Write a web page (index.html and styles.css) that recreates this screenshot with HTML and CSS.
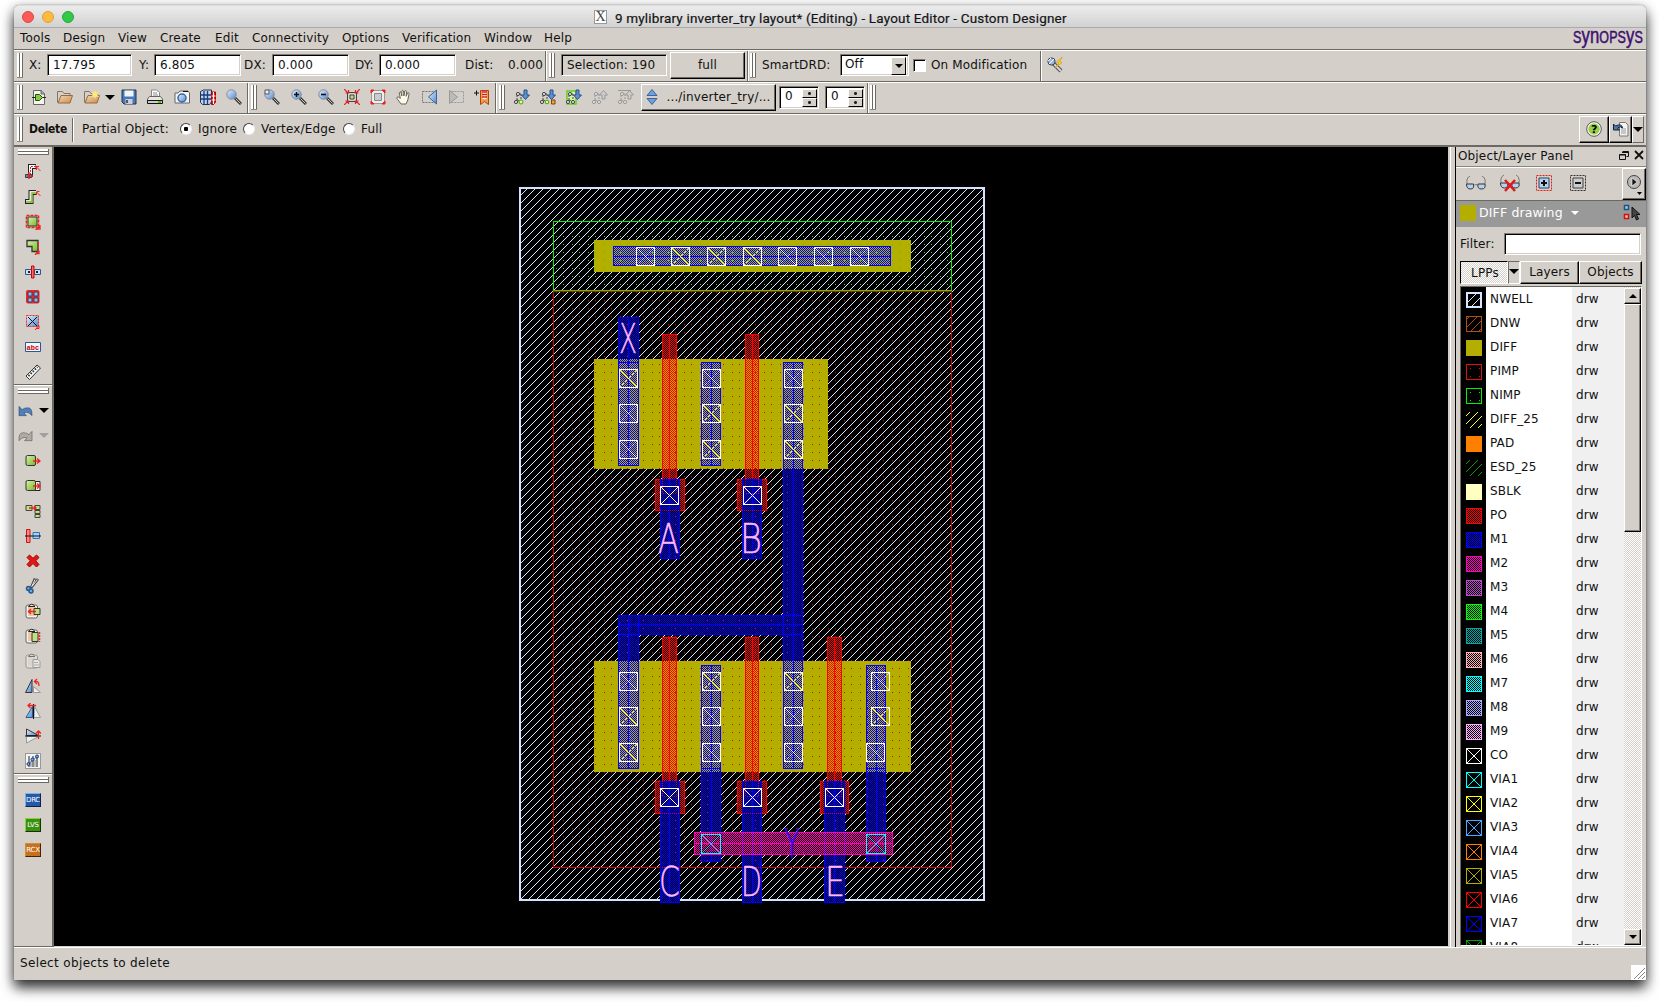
FILE: index.html
```html
<!DOCTYPE html>
<html lang="en">
<head>
<meta charset="utf-8">
<title>Layout Editor - Custom Designer</title>
<link rel="stylesheet" href="styles.css">
</head>
<body>
<svg class="defs" width="0" height="0">
  <defs>
    <linearGradient id="gb" x1="0" y1="0" x2="1" y2="1"><stop offset="0" stop-color="#e4f0ff"/><stop offset="1" stop-color="#5588cc"/></linearGradient>
    <linearGradient id="gg" x1="0" y1="0" x2="1" y2="1"><stop offset="0" stop-color="#d8f0a8"/><stop offset="1" stop-color="#7ab82a"/></linearGradient>
    <linearGradient id="gt" x1="0" y1="0" x2="1" y2="1"><stop offset="0" stop-color="#f4d8b4"/><stop offset="1" stop-color="#c88c4c"/></linearGradient>
    <symbol id="i-new" viewBox="0 0 16 16"><path d="M2.5 1.500h8l3 3v11h-11z" fill="#f4f4f0" stroke="#666"/><path d="M10 1v4h4" fill="#aaa" stroke="#666"/><path d="M1 8.500h4m6 0h4" stroke="#222"/><path d="M4.500 5.500h4l3 3-3 3h-4z" fill="#8c4" stroke="#250"/></symbol>
    <symbol id="i-open" viewBox="0 0 16 16"><path d="M.5 13.500v-11h5l1.500 2h6v2" fill="#d8d0c4" stroke="#777"/><path d="M1 14l3-7.500h11.500l-2.500 7.500z" fill="url(#gt)" stroke="#9a6a3c"/></symbol>
    <symbol id="i-openstar" viewBox="0 0 16 16"><use href="#i-open"/><path d="M11 1l1 2.500 3-.5-2 2.500 2 2.500-3-.5-1 2.500-1-2.500-3 .5 2-2.500-2-2.500 3 .5z" fill="#ffe97a"/></symbol>
    <symbol id="i-save" viewBox="0 0 16 16"><path d="M1 1h14v14h-12l-2-2z" fill="#4a78b4" stroke="#234"/><rect x="3.500" y="1.500" width="9" height="6" fill="#eef4fa"/><rect x="4.500" y="10" width="7" height="5" fill="#ccd"/><path d="M6 11v3" stroke="#234" stroke-width="1.500"/></symbol>
    <symbol id="i-print" viewBox="0 0 16 16"><path d="M4.500 8v-7h5l3 2.500v4.500" fill="#fff" stroke="#888"/><path d="M6 4h4M6 6h5" stroke="#888"/><path d="M2.500 7.500h11l2 2.500v2h-15v-2z" fill="#e8e8e0" stroke="#666"/><path d="M.5 11.500h15v3h-15z" fill="#ccc" stroke="#111"/><path d="M11 13h3" stroke="#5c0" stroke-width="2"/></symbol>
    <symbol id="i-cam" viewBox="0 0 16 16"><path d="M1 4h3l2-2h8l1.500 2v10h-14.500z" fill="#f4f4f4" stroke="#666"/><path d="M9 2.500h5" stroke="#111"/><circle cx="8" cy="9" r="4" fill="url(#gb)" stroke="#3666a4" stroke-width="1.500"/></symbol>
    <symbol id="i-cols" viewBox="0 0 16 16"><path d="M.5 2.500l3-1.500h8v12l-2 2.500h-7l-2-2z" fill="#bcd4f0" stroke="#235"/><path d="M4 2v13M7.500 2v13M1 6h10M1 10h10" stroke="#1a3c78" stroke-width="1.300"/><path d="M11.500 3h4v10l-2 2.500h-2z" fill="#e02020" stroke="#a00"/><path d="M11.500 7h4m-4 4h4m-2-8v12" stroke="#fff"/></symbol>
    <symbol id="i-mag" viewBox="0 0 16 16"><circle cx="5.500" cy="5.500" r="4.700" fill="url(#gb)" stroke="#8088a0"/><path d="M9 9l6 6" stroke="#333" stroke-width="3"/><path d="M9.500 9.500l5 5" stroke="#ccc"/></symbol>
    <symbol id="i-zbox" viewBox="0 0 16 16"><use href="#i-mag"/><path d="M1 1h4v4h-4z" fill="#eee" stroke="#555"/></symbol>
    <symbol id="i-zin" viewBox="0 0 16 16"><use href="#i-mag"/><path d="M3 5.500h5M5.500 3v5" stroke="#111" stroke-width="1.400"/></symbol>
    <symbol id="i-zout" viewBox="0 0 16 16"><use href="#i-mag"/><path d="M3 5.500h5" stroke="#111" stroke-width="1.600"/></symbol>
    <symbol id="i-fit" viewBox="0 0 16 16"><path d="M3.500 3.500h9v9h-9z" fill="none" stroke="#444"/><path d="M6 6h4v4h-4z" fill="#bfe080" stroke="#444"/><path d="M0 0l4 4M16 0l-4 4M0 16l4-4M16 16l-4-4M1.500 4h3v-3M14.500 4h-3v-3M1.500 12h3v3M14.500 12h-3v3" fill="none" stroke="#e02020" stroke-width="1.200"/></symbol>
    <symbol id="i-fit2" viewBox="0 0 16 16"><path d="M1.500 1.500h13v13h-13z" fill="#eee" stroke="#999"/><path d="M4.500 4.500h7v7h-7z" fill="#ccc" stroke="#888"/><path d="M1 4v-3h3zM15 4v-3h-3zM1 12v3h3zM15 12v3h-3z" fill="#f02020" stroke="#f02020"/></symbol>
    <symbol id="i-hand" viewBox="0 0 16 16"><path d="M5 15l-4-5.500q-.6-2 1.500-1.500l1.800 1.500-1-6q.7-1.600 1.700 0l.8 3.500v-5q1-1.600 1.800 0l.3 5 .9-5q1-1.200 1.700.3l-.3 5 1.400-3.400q1.200-.8 1.500.8l-1.300 6.300-1.800 4z" fill="#fff8ec" stroke="#665"/></symbol>
    <symbol id="i-prev" viewBox="0 0 16 16"><path d="M.5 2.500h12v11h-12z" fill="none" stroke="#777" stroke-dasharray="2 1"/><path d="M14.500 1v14l-8-7z" fill="url(#gb)" stroke="#3666a4"/></symbol>
    <symbol id="i-next" viewBox="0 0 16 16"><path d="M3.500 2.500h12v11h-12z" fill="none" stroke="#999" stroke-dasharray="2 1"/><path d="M1.500 1.500v13l8-6.500z" fill="#bbb" stroke="#999"/></symbol>
    <symbol id="i-book" viewBox="0 0 16 16"><path d="M0 4h5M2.500 1.500v5" stroke="#111"/><path d="M6.500 1.500h8v14l-4-3-4 3z" fill="#f4a040" stroke="#b04010"/><path d="M8.500 2h4v8h-4z" fill="#fff"/><path d="M8 3h5M8 5.500h5M8 8h5" stroke="#d02020" stroke-width="1.300"/></symbol>
    <symbol id="i-tree" viewBox="0 0 16 16"><path d="M3 11v-6M3 5h4M3 11l5 2M7 5v5" fill="none" stroke="currentColor" stroke-dasharray="2 1"/><circle cx="4" cy="5" r="1.600" fill="#ddd" stroke="currentColor"/><circle cx="2" cy="13" r="1.600" fill="#ddd" stroke="currentColor"/><circle cx="7" cy="13" r="1.600" fill="#ddd" stroke="currentColor"/></symbol>
    <symbol id="i-down" viewBox="0 0 16 16"><use href="#i-tree"/><path d="M10 1h3v5h2.500l-4 4.500-4-4.500h2.500z" fill="#5f90d0" stroke="#24518c"/></symbol>
    <symbol id="i-d1" viewBox="0 0 16 16"><use href="#i-down"/><circle cx="7" cy="13" r="2" fill="#dfa" stroke="#5a0"/></symbol>
    <symbol id="i-d2" viewBox="0 0 16 16"><use href="#i-down"/><circle cx="7" cy="13" r="1.800" fill="#dfa" stroke="#5a0"/><path d="M11.500 11h3.500v4h-3.500z" fill="#f0a050" stroke="#840"/></symbol>
    <symbol id="i-d3" viewBox="0 0 16 16"><path d="M1 2h9v13h-9z" fill="#d8f0b0" stroke="#6c2" stroke-width="1.500"/><use href="#i-down"/></symbol>
    <symbol id="i-up" viewBox="0 0 16 16"><use href="#i-tree"/><path d="M10 10v-4h-2.500l4-4.500 4 4.500h-2.500v4z" fill="#ccc" stroke="#999"/></symbol>
    <symbol id="i-up2" viewBox="0 0 16 16"><use href="#i-up"/><path d="M0 1.500h13" stroke="#999"/></symbol>
    <symbol id="i-updn" viewBox="0 0 12 16"><path d="M6 .5l5 6h-10zM6 15.500l5-6h-10z" fill="#6f9fdc" stroke="#24518c" stroke-width=".8"/></symbol>
    <symbol id="i-drd" viewBox="0 0 16 16"><path d="M6 6l8 8" stroke="#555" stroke-width="4"/><path d="M6 6l8 8" stroke="#ddd" stroke-width="1.800"/><circle cx="4.500" cy="4.500" r="3.600" fill="#9ab8e0" stroke="#345"/><path d="M2 7l5-5M1 4l3-3" stroke="#fff"/><path d="M15.500 0l-6 5 2.500 1-4 5 7-5.500-2.500-1z" fill="#ffd020" stroke="#c80" stroke-width=".5"/></symbol>
    <symbol id="i-help" viewBox="0 0 16 16"><circle cx="8" cy="8" r="7.300" fill="#fff" stroke="#555"/><circle cx="8" cy="8" r="5.800" fill="#9ad048"/></symbol>
    <symbol id="i-backdoc" viewBox="0 0 16 16"><path d="M6.500 1.500h6l2.500 2.500v11h-8.500z" fill="#f4f4f4" stroke="#777"/><path d="M8 8h5M8 10h5M8 12h5" stroke="#999"/><path d="M.5 3v6h6l-2-2q3-2.500 5 0-.5-5-7-2z" fill="#4a78b4" stroke="#123"/></symbol>

    <symbol id="l-path" viewBox="0 0 16 16"><path d="M5.500 13V2.500h5.500" fill="none" stroke="#222" stroke-width="5"/><path d="M5.500 13V2.500h5" fill="none" stroke="#fff" stroke-width="3"/><path d="M5.500 11V2.500h6" fill="none" stroke="#e22" stroke-dasharray="2 1"/><path d="M11 2.500h3M11.500 3l4 4M11.500 3v3" stroke="#e22"/></symbol>
    <symbol id="l-pathr" viewBox="0 0 16 16"><use href="#l-path"/><path d="M.5 10.500h6v3h-6z" fill="#6a94d4" stroke="#245"/><path d="M4 8v7M2 12h6" stroke="#e22" stroke-width="1.400"/></symbol>
    <symbol id="l-pathg" viewBox="0 0 16 16"><path d="M0 12.500H6V3.500h5" fill="none" stroke="#222" stroke-width="5"/><path d="M1 12.500H6V3.500h5" fill="none" stroke="#e8e8e0" stroke-width="3"/><path d="M1 13H7V4h4" fill="none" stroke="#7ab82a" stroke-width="1.500"/><path d="M11.500 2.500h3M11.500 3l4 4M11.500 3v3" stroke="#e22"/></symbol>
    <symbol id="l-rect" viewBox="0 0 16 16"><path d="M1.500 1.500h12v12h-12z" fill="none" stroke="#e22" stroke-width="1.600" stroke-dasharray="3 1"/><path d="M3 3h9v9h-9z" fill="url(#gg)" stroke="#333"/><path d="M15 11v4h-4M14.500 12l-4 4" stroke="#e22" stroke-width="1.300" fill="none"/></symbol>
    <symbol id="l-poly" viewBox="0 0 16 16"><path d="M2 1.500h11v11h-6v-5h-5z" fill="url(#gg)" stroke="#333" stroke-width="1.300"/><path d="M13.500 3v10" stroke="#e22" stroke-dasharray="2 1"/><path d="M14 11.500v3h-3M13 12.500l-3 3.500" stroke="#e22" stroke-width="1.300" fill="none"/></symbol>
    <symbol id="l-inst" viewBox="0 0 16 16"><path d="M.5 5.500h6v5h-6zM9.500 5.500h6v5h-6z" fill="#cde" stroke="#245a98"/><path d="M3 7h2v2h-2zM11 7h2v2h-2z" fill="#222"/><path d="M6.500 2h2.500v12h-2.500z" fill="#f66" stroke="#c00"/></symbol>
    <symbol id="l-arr" viewBox="0 0 16 16"><rect x="1" y="1" width="13.500" height="13.500" rx="2" fill="#e22"/><path d="M3 3h4v4h-4zM9 3h4v4h-4zM3 9h4v4h-4zM9 9h4v4h-4z" fill="#9ab8e8" stroke="#346"/></symbol>
    <symbol id="l-via" viewBox="0 0 16 16"><path d="M1.500 1.500h12v11h-12z" fill="url(#gb)" stroke="#e22" stroke-dasharray="2 1"/><path d="M3 3l9 9M12 3l-9 9" stroke="#111"/><path d="M14 11.500v3h-3M13 12.500l-3 3.500" stroke="#e22" fill="none"/></symbol>
    <symbol id="l-abc" viewBox="0 0 16 16"><path d="M.5 3.500h15v9h-15z" fill="#f6f6fa" stroke="#245a98"/><text x="1.600" y="10.500" font-family="Liberation Mono" font-weight="bold" font-size="7" letter-spacing="0" fill="#c00">abc</text></symbol>
    <symbol id="l-rule" viewBox="0 0 16 16"><path d="M1 12l11-11 3.500 3-11 11.500z" fill="#f8f8f8" stroke="#333"/><path d="M3.500 12l9-9" stroke="#333" stroke-dasharray="1.500 1.500" stroke-width="2"/></symbol>
    <symbol id="l-undo" viewBox="0 0 16 16"><path d="M1 3v10h8l-2.500-3q4-2 8.500 3 .500-9-5-8.500-3.500 0-5.500 2z" fill="currentColor" stroke="#0005"/></symbol>
    <symbol id="l-move" viewBox="0 0 16 16"><rect x="1" y="2.500" width="9.500" height="10" rx="1.500" fill="url(#gg)" stroke="#333"/><path d="M8 8h7M12 5.500l3 2.500-3 2.500" fill="none" stroke="#e22" stroke-width="1.400"/></symbol>
    <symbol id="l-copy" viewBox="0 0 16 16"><path d="M9 3.500h6v9h-6z" fill="#f4f4f0" stroke="#222"/><use href="#l-move"/></symbol>
    <symbol id="l-multi" viewBox="0 0 16 16"><path d="M1 2.500h6v5h-6zM10 2.500h5v4h-5zM10 7.500h5v3h-5zM10 11.500h5v3h-5z" fill="#bfe080" stroke="#444"/><path d="M4 5h7M9 3l2 2-2 2" stroke="#e22" fill="none" stroke-width="1.300"/></symbol>
    <symbol id="l-align" viewBox="0 0 16 16"><path d="M1.500 1.500h3.500v13h-3.500z" fill="#f88" stroke="#c11"/><path d="M8 4.500h6.500v6h-6.500z" fill="#acf" stroke="#37a"/><path d="M0 8h16" stroke="#111"/></symbol>
    <symbol id="l-del" viewBox="0 0 16 16"><path d="M2 4.500l2.500-2.500 3.500 3.300 3.500-3.300 2.500 2.500-3.300 3.300 3.300 3.700-2.500 2.500-3.500-3.500-3.500 3.500-2.500-2.500 3.300-3.700z" fill="#e01818" stroke="#a00"/></symbol>
    <symbol id="l-cut" viewBox="0 0 16 16"><path d="M6 10l7-9M6 10l4-9.500" stroke="#444" stroke-width="2.500"/><path d="M6.500 9l6-7.500M7 8l3-6.500" stroke="#eee"/><circle cx="3.500" cy="10.500" r="2" fill="#7ac" stroke="#235a98" stroke-width="1.500"/><circle cx="6" cy="13" r="2" fill="#7ac" stroke="#235a98" stroke-width="1.500"/></symbol>
    <symbol id="l-clip" viewBox="0 0 16 16"><rect x="1" y="2" width="11.500" height="13" rx="2" fill="#f4f2ee" stroke="#666"/><path d="M3 4h8v9h-8z" fill="currentColor"/><path d="M3.500 3.500q3-4.500 6.500 0z" fill="#eee" stroke="#222"/></symbol>
    <symbol id="l-pin" viewBox="0 0 16 16"><use href="#l-clip"/><path d="M9 5.500h6v6h-6z" fill="#bfe080" stroke="#333"/><path d="M3 8.500h8M6 6l-2.500 2.500 2.500 2.500" stroke="#e22" fill="none" stroke-width="1.400"/></symbol>
    <symbol id="l-pst" viewBox="0 0 16 16"><use href="#l-clip"/><path d="M7 4.500h6v9h-6z" fill="#bfe080" stroke="#333"/><path d="M14.500 4v10" stroke="#e22" stroke-dasharray="2 1" stroke-width="1.500"/></symbol>
    <symbol id="l-pgr" viewBox="0 0 16 16"><use href="#l-clip" opacity=".55"/><path d="M8 6.500h5l2 2v6h-7z" fill="#e8e6e0" stroke="#999"/><path d="M9 9.500h4M9 12h5" stroke="#aaa"/></symbol>
    <symbol id="l-rot" viewBox="0 0 16 16"><path d="M.5 14.500h6.500v-13z" fill="url(#gb)" stroke="#333"/><path d="M8.500 14.500h7l-7-6z" fill="#eee" stroke="#999"/><path d="M10 3.500q4-1 4 4.500M12 1l-2.500 2.500 2.500 2.500" fill="none" stroke="#e22" stroke-width="1.300"/></symbol>
    <symbol id="l-mx" viewBox="0 0 16 16"><path d="M1 14.500h6.500v-11z" fill="url(#gb)" stroke="#235a98"/><path d="M9 14.500h6.500l-6-11z" fill="#eee" stroke="#999"/><path d="M8.500 1v15" stroke="#111"/><path d="M3 2.500h8M5.500 0l-2.500 2.500 2.500 2.500" fill="none" stroke="#e22" stroke-width="1.300"/></symbol>
    <symbol id="l-my" viewBox="0 0 16 16"><path d="M1.500 1v6.500h12z" fill="url(#gb)" stroke="#333"/><path d="M1.500 15v-6.500h12z" fill="#eee" stroke="#999"/><path d="M0 8h16" stroke="#111"/><path d="M13.500 11v-8M11 5.500l2.500-2.500 2.500 2.500" fill="none" stroke="#e22" stroke-width="1.300"/></symbol>
    <symbol id="l-prop" viewBox="0 0 16 16"><rect x=".5" y=".5" width="15" height="15" fill="#f4f4f4" stroke="#999"/><path d="M4 3v11M8 3v11M12 3v11" stroke="#222"/><path d="M6 8v6M10 7v7" stroke="#888"/><path d="M3.500 11l8-7" stroke="#48c"/><circle cx="3.500" cy="11" r="1.500" fill="#6af" stroke="#236"/><circle cx="7.500" cy="6.500" r="1.500" fill="#6af" stroke="#236"/><circle cx="12" cy="3.500" r="1.500" fill="#6af" stroke="#236"/></symbol>

    <symbol id="p-gl" viewBox="0 0 22 16"><path d="M2 9q-1-6 3-8M20 9q1-6-3-8M9.500 10q1.500-1 3 0" fill="none" stroke="#7a7a70"/><path d="M1.500 9h7q1 5-3 5t-4-5zM13 9h7q1 5-3.500 5t-3.500-5z" fill="#b4d0f4" stroke="#333"/></symbol>
    <symbol id="p-sel" viewBox="0 0 18 18"><path d="M1.500 1.500h15v15h-15z" fill="none" stroke="currentColor" stroke-dasharray="2 1"/><path d="M4 4h10v10h-10z" fill="#b8d0f0" stroke="#246"/></symbol>
    <symbol id="p-pick" viewBox="0 0 18 18"><path d="M1.500 1.500h4v4h-4z" fill="#9cf" stroke="#257" stroke-width="1.500"/><path d="M1.500 10.500h4v4h-4z" fill="#fbb" stroke="#c11" stroke-width="1.500"/><path d="M9 3v11l2.500-2.500 2 4.500 2-1-2-4.500h3.500z" fill="#444" stroke="#111"/></symbol>

    <pattern id="hatch" width="8" height="8" patternUnits="userSpaceOnUse"><path d="M3 0h1v1h-1zM2 1h1v1h-1zM1 2h1v1h-1zM0 3h1v1h-1zM7 4h1v1h-1zM6 5h1v1h-1zM5 6h1v1h-1zM4 7h1v1h-1z" fill="#d8e6ff"/></pattern>
    <pattern id="dg" width="16" height="8" patternUnits="userSpaceOnUse"><path d="M3 4h1v1h-1zM12 4h1v1h-1z" fill="#00f000"/></pattern>
    <pattern id="dr" width="16" height="8" patternUnits="userSpaceOnUse"><path d="M3 4h1v1h-1zM12 4h1v1h-1z" fill="#e00000"/></pattern>
    <pattern id="cb" width="2" height="2" patternUnits="userSpaceOnUse"><path d="M0 0h1v1h-1zM1 1h1v1h-1z" fill="#0000ff"/></pattern>
    <pattern id="cr" width="2" height="2" patternUnits="userSpaceOnUse"><path d="M0 0h1v1h-1zM1 1h1v1h-1z" fill="#ff0000"/></pattern>
    <pattern id="cm" width="2" height="2" patternUnits="userSpaceOnUse"><path d="M0 0h1v1h-1zM1 1h1v1h-1z" fill="#ff00b4"/></pattern>
    <symbol id="co" viewBox="0 0 19 19"><path d="M1 1l17 17" stroke="#fffb90"/><path d="M18 1l-17 17" stroke="#dcdcff" stroke-dasharray="3 1.500"/><path d="M.5.500h18v18h-18z" fill="none" stroke="#fff"/></symbol>
    <symbol id="cg" viewBox="0 0 19 19"><path d="M1 1l17 17M18 1l-17 17" stroke="#fff"/><path d="M.5.500h18v18h-18z" fill="none" stroke="#fff"/></symbol>
    <symbol id="via" viewBox="0 0 20 20"><path d="M1 1l18 18M19 1l-18 18" stroke="#30c8d8"/><path d="M.5.500h19v19h-19z" fill="none" stroke="#0ff"/></symbol>
    <symbol id="sx" viewBox="0 0 16 16"><path d="M1 1l14 14M15 1l-14 14" stroke="currentColor"/><path d="M.5.500h15v15h-15z" fill="none" stroke="currentColor"/></symbol>
    <symbol id="sh" viewBox="0 0 16 16"><path d="M0 4l4-4M0 12l12-12M4 16l12-12M12 16l4-4" stroke="currentColor"/></symbol>
  </defs>
</svg>

<div class="window">
  <header class="titlebar">
    <span class="light red"></span><span class="light amber"></span><span class="light green"></span>
    <span class="x11">X</span><h1>9 mylibrary inverter_try layout* (Editing) - Layout Editor - Custom Designer</h1>
  </header>

  <nav class="menubar">
    <span>Tools</span><span>Design</span><span>View</span><span>Create</span><span>Edit</span><span>Connectivity</span><span>Options</span><span>Verification</span><span>Window</span><span>Help</span>
    <svg class="brand" width="72" height="20"><text x="0" y="15" textLength="70" lengthAdjust="spacingAndGlyphs">S<tspan class="tall">yn</tspan>OPS<tspan class="tall">y</tspan>S</text></svg>
  </nav>

  <div class="bar coords">
    <i class="grip"></i><label>X:</label><span class="field w85">17.795</span><label>Y:</label><span class="field w87">6.805</span><label>DX:</label><span class="field w76">0.000</span><label>DY:</label><span class="field w76">0.000</span><label>Dist:</label><label>0.000</label><i class="sep"></i>
    <i class="grip"></i><span class="field flat">Selection: 190</span><span class="btn full">full</span><i class="sep"></i>
    <i class="grip"></i><label>SmartDRD:</label><span class="field combo">Off<b class="drop"><i class="tri"></i></b></span><i class="check"></i><label>On Modification</label><i class="sep"></i><svg class="ic"><use href="#i-drd"/></svg>
  </div>

  <div class="bar tools">
    <i class="grip"></i><svg class="ic"><use href="#i-new"/></svg><svg class="ic"><use href="#i-open"/></svg><svg class="ic"><use href="#i-openstar"/></svg><i class="tri big"></i><svg class="ic"><use href="#i-save"/></svg><svg class="ic"><use href="#i-print"/></svg><svg class="ic"><use href="#i-cam"/></svg><svg class="ic"><use href="#i-cols"/></svg><svg class="ic"><use href="#i-mag"/></svg><i class="sep"></i>
    <i class="grip"></i><svg class="ic"><use href="#i-zbox"/></svg><svg class="ic"><use href="#i-zin"/></svg><svg class="ic"><use href="#i-zout"/></svg><svg class="ic"><use href="#i-fit"/></svg><svg class="ic"><use href="#i-fit2"/></svg><svg class="ic"><use href="#i-hand"/></svg><svg class="ic"><use href="#i-prev"/></svg><svg class="ic"><use href="#i-next"/></svg><svg class="ic"><use href="#i-book"/></svg><i class="sep"></i>
    <i class="grip"></i><svg class="ic"><use href="#i-d1"/></svg><svg class="ic"><use href="#i-d2"/></svg><svg class="ic"><use href="#i-d3"/></svg><svg class="ic dim"><use href="#i-up"/></svg><svg class="ic dim"><use href="#i-up2"/></svg>
    <span class="btn cell"><svg width="12" height="16"><use href="#i-updn"/></svg>.../inverter_try/...</span>
    <span class="field spin">0<b><i></i><i></i></b></span><span class="field spin">0<b><i></i><i></i></b></span><i class="sep"></i><i class="grip"></i>
  </div>

  <div class="bar options">
    <i class="grip"></i><strong>Delete</strong><i class="sep thin"></i><label>Partial Object:</label><i class="radio on"></i><label>Ignore</label><i class="radio"></i><label>Vertex/Edge</label><i class="radio"></i><label>Full</label>
    <div class="right"><span class="btn help"><svg class="ic"><use href="#i-help"/><text x="5" y="12">?</text></svg></span><span class="btn doc"><svg class="ic"><use href="#i-backdoc"/></svg></span><span class="btn menu"><i class="tri big"></i></span></div>
  </div>

  <main>
    <aside class="side">
      <div class="group g1"><i class="hgrip"></i>
        <svg class="ic"><use href="#l-pathr"/></svg><svg class="ic"><use href="#l-pathg"/></svg><svg class="ic"><use href="#l-rect"/></svg><svg class="ic"><use href="#l-poly"/></svg><svg class="ic"><use href="#l-inst"/></svg><svg class="ic"><use href="#l-arr"/></svg><svg class="ic"><use href="#l-via"/></svg><svg class="ic"><use href="#l-abc"/></svg><svg class="ic"><use href="#l-rule"/></svg>
      </div>
      <div class="group g2"><i class="hgrip"></i>
        <span class="pair undo"><svg class="ic"><use href="#l-undo"/></svg><i class="tri big"></i></span>
        <span class="pair redo"><svg class="ic"><use href="#l-undo" transform="matrix(-1 0 0 1 15 0)"/></svg><i class="tri big"></i></span>
        <svg class="ic"><use href="#l-move"/></svg><svg class="ic"><use href="#l-copy"/></svg><svg class="ic"><use href="#l-multi"/></svg><svg class="ic"><use href="#l-align"/></svg><svg class="ic"><use href="#l-del"/></svg><svg class="ic"><use href="#l-cut"/></svg><svg class="ic tan"><use href="#l-pin"/></svg><svg class="ic tan"><use href="#l-pst"/></svg><svg class="ic pale"><use href="#l-pgr"/></svg><svg class="ic"><use href="#l-rot"/></svg><svg class="ic"><use href="#l-mx"/></svg><svg class="ic"><use href="#l-my"/></svg><svg class="ic"><use href="#l-prop"/></svg>
      </div>
      <div class="group g3"><i class="hgrip"></i><span class="tag drc">DRC</span><span class="tag lvs">LVS</span><span class="tag rcx">RCX</span></div>
    </aside>

    <svg class="canvas" viewBox="54 147 1394 799" width="1394" height="799" shape-rendering="crispEdges">
      <rect x="521" y="189" width="462" height="710" fill="url(#hatch)"/>
      <rect x="520" y="188" width="464" height="712" fill="none" stroke="#d2e2ff" stroke-width="2"/>
      <g fill="#000">
        <rect x="618" y="317" width="21" height="60"/><rect x="783" y="466" width="20" height="200"/><rect x="618" y="615" width="185" height="20"/><rect x="618" y="615" width="21" height="60"/>
        <rect x="701" y="700" width="20" height="162"/><rect x="866" y="700" width="20" height="162"/>
        <rect x="660" y="479" width="20" height="80"/><rect x="742" y="479" width="20" height="80"/>
        <rect x="660" y="781" width="20" height="122"/><rect x="742" y="781" width="20" height="122"/><rect x="824" y="781" width="21" height="122"/>
        <rect x="662" y="334" width="15" height="150"/><rect x="745" y="334" width="14" height="150"/><rect x="662" y="637" width="15" height="150"/><rect x="745" y="637" width="14" height="150"/><rect x="827" y="637" width="15" height="150"/>
        <rect x="655" y="479" width="30" height="32"/><rect x="737" y="479" width="30" height="32"/><rect x="655" y="781" width="30" height="33"/><rect x="737" y="781" width="30" height="33"/><rect x="820" y="781" width="29" height="33"/>
        <rect x="694" y="832" width="199" height="23"/>
      </g>
      <g fill="#b4ae00"><rect x="594" y="240" width="317" height="32"/><rect x="594" y="359" width="234" height="110"/><rect x="594" y="661" width="317" height="111"/></g>
      <rect x="553.5" y="291.5" width="398" height="576" fill="url(#dr)" stroke="#d80000"/>
      <g fill="url(#cr)" stroke="#f00">
        <rect x="662.5" y="334.500" width="14" height="145"/><rect x="745.5" y="334.500" width="13" height="145"/>
        <rect x="662.5" y="637.500" width="14" height="144"/><rect x="745.5" y="637.500" width="13" height="144"/><rect x="827.5" y="637.500" width="14" height="144"/>
        <rect x="655.5" y="479.500" width="29" height="31"/><rect x="737.5" y="479.500" width="29" height="31"/>
        <rect x="655.5" y="781.500" width="29" height="32"/><rect x="737.5" y="781.500" width="29" height="32"/><rect x="820.5" y="781.500" width="28" height="32"/>
        <path d="M669.500 334v160M752.500 334v160M669.500 637v160M752.500 637v160M834.500 637v160"/>
      </g>
      <g fill="#00001c"><rect x="660" y="479" width="20" height="32"/><rect x="742" y="479" width="20" height="32"/><rect x="660" y="781" width="20" height="33"/><rect x="742" y="781" width="20" height="33"/><rect x="824" y="781" width="21" height="33"/></g>
      <g fill="url(#cb)" stroke="#0000ff">
        <rect x="613.5" y="246.500" width="277" height="19"/>
        <rect x="618.5" y="317.500" width="20" height="148"/><rect x="701.5" y="362.500" width="19" height="103"/><rect x="783.5" y="362.500" width="19" height="406"/>
        <rect x="618.5" y="615.500" width="184" height="19"/><rect x="618.5" y="615.500" width="20" height="153"/>
        <rect x="701.5" y="665.500" width="19" height="196"/><rect x="866.5" y="665.500" width="19" height="196"/>
        <rect x="660.5" y="479.500" width="19" height="79"/><rect x="742.5" y="479.500" width="19" height="79"/>
        <rect x="660.5" y="781.500" width="19" height="121"/><rect x="742.5" y="781.500" width="19" height="121"/><rect x="824.5" y="781.500" width="20" height="121"/>
        <path d="M613 256.500h278M628.500 317v149M711.500 362v104M793.500 362v407M618 624.500h185M628.500 615v154M711.500 665v197M876.500 665v197M669.500 479v80M752.500 479v80M669.500 781v122M752.500 781v122M834.500 781v122M618 362.500h21M701 768.500h20M866 768.500h20"/>
      </g>
      <g fill="none" stroke="#f00" stroke-dasharray="1 1" opacity=".8"><path d="M662.500 479v14h14v-14M745.500 479v14h13v-14M662.500 781v15h14v-15M745.500 781v15h13v-15M827.500 781v15h14v-15M660 510.500h20M742 510.500h20M660 813.500h20M742 813.500h20M824 813.500h20"/></g>
      <rect x="553.5" y="221.500" width="398" height="69" fill="url(#dg)" stroke="#00f000"/>
      <rect x="694.5" y="832.500" width="198" height="22" fill="url(#cm)" stroke="#ff00b4"/><path d="M694 843.500h199" stroke="#ff00b4"/>
      <g>
        <use href="#co" x="636" y="247" width="19" height="19"/><use href="#co" x="671" y="247" width="19" height="19"/><use href="#co" x="707" y="247" width="19" height="19"/><use href="#co" x="743" y="247" width="19" height="19"/><use href="#co" x="778" y="247" width="19" height="19"/><use href="#co" x="814" y="247" width="19" height="19"/><use href="#co" x="850" y="247" width="19" height="19"/>
        <use href="#co" x="619" y="369" width="19" height="19"/><use href="#co" x="619" y="404" width="19" height="19"/><use href="#co" x="619" y="440" width="19" height="19"/>
        <use href="#co" x="702" y="369" width="19" height="19"/><use href="#co" x="702" y="404" width="19" height="19"/><use href="#co" x="702" y="440" width="19" height="19"/>
        <use href="#co" x="784" y="369" width="19" height="19"/><use href="#co" x="784" y="404" width="19" height="19"/><use href="#co" x="784" y="440" width="19" height="19"/>
        <use href="#co" x="619" y="672" width="19" height="19"/><use href="#co" x="619" y="707" width="19" height="19"/><use href="#co" x="619" y="743" width="19" height="19"/>
        <use href="#co" x="702" y="672" width="19" height="19"/><use href="#co" x="702" y="707" width="19" height="19"/><use href="#co" x="702" y="743" width="19" height="19"/>
        <use href="#co" x="784" y="672" width="19" height="19"/><use href="#co" x="784" y="707" width="19" height="19"/><use href="#co" x="784" y="743" width="19" height="19"/>
        <use href="#co" x="871" y="672" width="19" height="19"/><use href="#co" x="871" y="707" width="19" height="19"/><use href="#co" x="866" y="743" width="19" height="19"/>
        <use href="#cg" x="660" y="486" width="19" height="19"/><use href="#cg" x="743" y="486" width="19" height="19"/>
        <use href="#cg" x="660" y="788" width="19" height="19"/><use href="#cg" x="743" y="788" width="19" height="19"/><use href="#cg" x="825" y="788" width="19" height="19"/>
        <use href="#via" x="701" y="834" width="20" height="20"/><use href="#via" x="866" y="834" width="20" height="20"/>
      </g>
      <g class="pins">
        <text x="619" y="353" textLength="18" lengthAdjust="spacingAndGlyphs">X</text><text x="658" y="553" textLength="21" lengthAdjust="spacingAndGlyphs">A</text><text x="740" y="553" textLength="22" lengthAdjust="spacingAndGlyphs">B</text>
        <text x="659" y="896" textLength="21" lengthAdjust="spacingAndGlyphs">C</text><text x="741" y="896" textLength="21" lengthAdjust="spacingAndGlyphs">D</text><text x="825" y="896" textLength="20" lengthAdjust="spacingAndGlyphs">E</text>
        <text class="net" x="784" y="858" textLength="16" lengthAdjust="spacingAndGlyphs">Y</text>
      </g>
    </svg>

    <i class="splitter"></i>
    <aside class="panel">
      <div class="phead"><span>Object/Layer Panel</span><svg width="26" height="12"><path d="M3.500 1.500h6v5h-2M3 2.500h7M1 5h6M.5 4.500h6v5h-6z" fill="none" stroke="#111"/><path d="M16 1l8 8M24 1l-8 8" stroke="#111" stroke-width="1.800"/></svg></div>
      <div class="pact">
        <svg width="22" height="16"><use href="#p-gl"/></svg><svg width="22" height="18"><use href="#p-gl" height="16"/><path d="M6 6l10 11M16 6l-10 11" stroke="#e01818" stroke-width="2.500"/></svg>
        <svg class="s18 hot"><use href="#p-sel"/><path d="M6 9h6M9 6v6" stroke="#111" stroke-width="2"/></svg><svg class="s18 off"><use href="#p-sel"/><path d="M6 9h6" stroke="#111" stroke-width="2"/></svg>
        <span class="btn go"><svg width="18" height="26"><circle cx="9" cy="10" r="6.500" fill="#bbb" stroke="#444"/><path d="M7 6l5 4-5 4z" fill="#111" stroke="#fff" stroke-width=".6"/><path d="M12 20h5l-2.500 3z"/></svg></span>
      </div>
      <div class="pcur"><i></i><span>DIFF drawing</span><i class="tri big white"></i><svg class="s18"><use href="#p-pick"/></svg></div>
      <div class="pfilter"><label>Filter:</label><span class="field"></span></div>
      <div class="ptabs"><span class="tab on">LPPs</span><span class="tab dd"><i class="tri big"></i></span><span class="tab">Layers</span><span class="tab">Objects</span></div>
      <div class="plist">
        <ul>
          <li><i class="sw nwell"><svg><use href="#sh"/></svg></i><span>NWELL</span><em>drw</em></li>
          <li><i class="sw dnw"><svg><use href="#sh"/></svg></i><span>DNW</span><em>drw</em></li>
          <li><i class="sw diff"></i><span>DIFF</span><em>drw</em></li>
          <li><i class="sw pimp"><b></b></i><span>PIMP</span><em>drw</em></li>
          <li><i class="sw nimp"><b></b></i><span>NIMP</span><em>drw</em></li>
          <li><i class="sw diff25"><svg><use href="#sh"/></svg></i><span>DIFF_25</span><em>drw</em></li>
          <li><i class="sw pad"></i><span>PAD</span><em>drw</em></li>
          <li><i class="sw esd"><svg><use href="#sh"/></svg></i><span>ESD_25</span><em>drw</em></li>
          <li><i class="sw sblk"></i><span>SBLK</span><em>drw</em></li>
          <li><i class="sw st po"></i><span>PO</span><em>drw</em></li>
          <li><i class="sw st m1"></i><span>M1</span><em>drw</em></li>
          <li><i class="sw st m2"></i><span>M2</span><em>drw</em></li>
          <li><i class="sw st m3"></i><span>M3</span><em>drw</em></li>
          <li><i class="sw st m4"></i><span>M4</span><em>drw</em></li>
          <li><i class="sw st m5"></i><span>M5</span><em>drw</em></li>
          <li><i class="sw st m6"></i><span>M6</span><em>drw</em></li>
          <li><i class="sw st m7"></i><span>M7</span><em>drw</em></li>
          <li><i class="sw st m8"></i><span>M8</span><em>drw</em></li>
          <li><i class="sw st m9"></i><span>M9</span><em>drw</em></li>
          <li><i class="sw co"><svg><use href="#sx"/></svg></i><span>CO</span><em>drw</em></li>
          <li><i class="sw v1"><svg><use href="#sx"/></svg></i><span>VIA1</span><em>drw</em></li>
          <li><i class="sw v2"><svg><use href="#sx"/></svg></i><span>VIA2</span><em>drw</em></li>
          <li><i class="sw v3"><svg><use href="#sx"/></svg></i><span>VIA3</span><em>drw</em></li>
          <li><i class="sw v4"><svg><use href="#sx"/></svg></i><span>VIA4</span><em>drw</em></li>
          <li><i class="sw v5"><svg><use href="#sx"/></svg></i><span>VIA5</span><em>drw</em></li>
          <li><i class="sw v6"><svg><use href="#sx"/></svg></i><span>VIA6</span><em>drw</em></li>
          <li><i class="sw v7"><svg><use href="#sx"/></svg></i><span>VIA7</span><em>drw</em></li>
          <li><i class="sw v8"><svg><use href="#sx"/></svg></i><span>VIA8</span><em>drw</em></li>
        </ul>
        <div class="scroll"><b class="sb"><i class="tri up"></i></b><b class="thumb"></b><b class="sb end"><i class="tri"></i></b></div>
      </div>
    </aside>
  </main>

  <footer><span>Select objects to delete</span><svg width="15" height="15"><path d="M0 0h15v15h-15z" fill="#fff"/><path d="M3 14l11-11M7 14l7-7M11 14l3-3" stroke="#888"/></svg></footer>
</div>
</body>
</html>
```
FILE: styles.css
```css
* { box-sizing: border-box; }
body { margin: 0; width: 1660px; height: 1002px; overflow: hidden; background: #fff; padding: 5px 14px 22px; font: 12px/14px "DejaVu Sans", sans-serif; letter-spacing: .15px; color: #111; }
.defs { position: absolute; }
i, em { font-style: normal; display: block; }
svg { display: block; }
.window { width: 1632px; height: 975px; background: #d4cfc8; border-radius: 5px 5px 0 0; display: flex; flex-direction: column; box-shadow: 0 0 1px rgba(0,0,0,.6), 0 8px 13px rgba(0,0,0,.75), 0 2px 12px rgba(0,0,0,.25); }
.titlebar { height: 23px; flex: none; display: flex; align-items: center; padding-left: 8px; border-radius: 5px 5px 0 0; background: linear-gradient(#ececec, #d2d2d2); border-top: 1px solid #dcdcdc; border-bottom: 1px solid #aaa; }
.light { width: 12px; height: 12px; border-radius: 50%; margin-right: 8px; }
.light.red { background: #fc5b57; border: 1px solid #e2443f; }
.light.amber { background: #fdbc40; border: 1px solid #de9f34; }
.light.green { background: #34c84a; border: 1px solid #27aa35; }
.x11 { margin-left: 512px; width: 13px; height: 14px; background: #fff; border: 1px solid #999; font: 14px/12px "Liberation Serif", serif; letter-spacing: 0; text-align: center; color: #444; }
h1 { margin: 2px 0 0 8px; font: 400 13.5px/20px Roboto, sans-serif; letter-spacing: .17px; white-space: pre; -webkit-text-stroke: .2px #222; }
.menubar { height: 22px; flex: none; display: grid; grid-template-columns: 43px 55px 42px 55px 37px 90px 60px 82px 60px 1fr 73px; padding: 0 0 1px 6px; align-items: center; border-bottom: 1px solid #6c6963; }
.brand { overflow: visible; }
.brand text { font: 400 16.5px "Liberation Sans Narrow", "Liberation Sans", sans-serif; fill: #3c1070; stroke: #3c1070; stroke-width: .5px; }
.brand .tall { font-size: 22px; }
.bar { height: 32px; flex: none; display: grid; align-items: center; justify-items: start; padding: 0 0 2px 3px; border-top: 1px solid #fff; border-bottom: 1px solid #6c6963; white-space: nowrap; }
.coords { grid-template-columns: 12px 18px 92px 15px 90px 28px 83px 24px 86px 43px 37px 4px 12px 109px 77px 3px 12px 78px 73px 18px 109px 7px 20px; }
.tools { grid-template-columns: 14px 26px 27px 21px 16px 26px 27px 26px 26px 21px 4px 13px 27px 27px 26px 26px 26px 26px 26px 26px 21px 4px 15px 26px 26px 26px 26px 23px 138px 46px 42px 3px 10px; }
.options { grid-template-columns: 12px 43px 10px 98px 18px 45px 18px 82px 18px 50px 1fr; }
.grip { width: 6px; height: 24px; border-left: 2px solid #fff; border-right: 1px solid #6c6963; background: linear-gradient(90deg, #6c6963 1px, #fff 1px 2px, #fff 2px); background-clip: padding-box; box-shadow: 0 1px #8a867f; }
.sep { width: 2px; height: 30px; margin-bottom: -2px; border-left: 1px solid #6c6963; border-right: 1px solid #fff; }
.sep.thin { height: 24px; }
.ic { width: 16px; height: 16px; }
.dim { color: #999; }
.tools .ic { color: #444; }
.tools .ic.dim { color: #999; }
.field { height: 22px; background: #fff; border: 1px solid; border-color: #807c74 #fff #fff #807c74; box-shadow: inset 1px 1px #000, inset -1px -1px #d4cfc8; padding: 3px 5px; }
.w85 { width: 85px; } .w87 { width: 87px; } .w76 { width: 77px; }
.flat { width: 106px; background: #d4cfc8; }
.btn { height: 27px; background: #d4cfc8; border: 1px solid; border-color: #fff #000 #000 #fff; box-shadow: inset -1px -1px #6c6963; display: flex; align-items: center; justify-content: center; }
.full { width: 75px; }
.combo { width: 69px; display: flex; justify-content: space-between; padding: 2px 2px 2px 4px; }
.drop { width: 15px; height: 18px; background: #d4cfc8; border: 1px solid; border-color: #fff #000 #000 #fff; display: flex; align-items: center; justify-content: center; }
.tri { width: 0; height: 0; border: solid transparent; border-width: 4px 4px 0; border-top-color: #000; }
.tri.big { border-width: 5px 5px 0; }
.tri.up { border-width: 0 4px 4px; border-bottom-color: #000; }
.tri.white { border-top-color: #fff; border-width: 4px 4px 0; }
.check { width: 13px; height: 13px; background: #fff; border: 1px solid; border-color: #807c74 #fff #fff #807c74; box-shadow: inset 1px 1px #000; }
.cell { width: 135px; gap: 8px; }
.spin { width: 40px; display: flex; justify-content: space-between; padding: 2px 1px 1px 5px; height: 23px; }
.spin b { width: 15px; display: flex; flex-direction: column; }
.spin b i { height: 10px; background: radial-gradient(circle at 50% 50%, #222 1.3px, transparent 1.6px) #d4cfc8; border: 1px solid; border-color: #fff #000 #000 #fff; }
strong { font: bold 12px/14px "DejaVu Sans Condensed", "DejaVu Sans", sans-serif; font-stretch: condensed; letter-spacing: -.3px; }
.radio { width: 12px; height: 12px; border-radius: 50%; background: #fff; border: 1px solid; border-color: #444 #eee #eee #444; }
.radio.on { background: radial-gradient(circle, #000 2px, #fff 2.500px); }
.right { justify-self: end; display: flex; padding-right: 2px; }
.help { width: 30px; } .doc { width: 23px; } .menu { width: 12px; box-shadow: none; border-color: #fff #6c6963 #6c6963 #fff; }
.help text { font: bold 11px "DejaVu Sans"; }
main { height: 801px; flex: none; display: flex; border-top: 1px solid #6c6963; }
.side { width: 40px; border-right: 2px solid #6c6963; border-bottom: 1px solid #6c6963; }
.group { display: grid; grid-template-rows: 12px; grid-auto-rows: 25px; justify-items: center; align-items: center; border-bottom: 1px solid #6c6963; width: 38px; }
.g2, .g3 { border-top: 1px solid #fff; }
.g3 { border-bottom: 0; }
.hgrip { width: 31px; height: 6px; align-self: start; margin-top: 2px; background: linear-gradient(#fff 2px, #6c6963 2px 3px, #fff 3px 5px, #6c6963 5px); border-right: 1px solid #6c6963; }
.pair { display: flex; align-items: center; gap: 6px; }
.pair .ic { width: 15px; }
.undo { color: #4c80be; } .redo { color: #b0aca4; } .redo .tri { border-top-color: #a0a0a0; }
.tan { color: #f0c8a0; } .pale { color: #e0ddd6; }
.tag { width: 16px; height: 14px; font: 7px/12px "DejaVu Sans"; letter-spacing: -.3px; color: #fff; text-align: center; border: 1px solid; overflow: hidden; }
.drc { background: #2458a8; border-color: #7ab0e8 #124 #124 #7ab0e8; }
.lvs { background: #3c9010; border-color: #8cd040 #131 #131 #8cd040; }
.rcx { background: #c87020; border-color: #c89030 #421 #421 #c89030; }
.canvas { background: #000; flex: none; }
.pins text { font: 200 41px "DejaVu Sans Light", "DejaVu Sans"; fill: #ffb8ff; letter-spacing: 0; stroke: #ffb8ff; stroke-width: .4px; }
.pins .net { fill: #3010f8; stroke: #3010f8; }
.splitter { width: 8px; background: linear-gradient(90deg, #d4cfc8 2px, #fff 2px 3px, #d4cfc8 3px 7px, #000 7px); }
.panel { width: 190px; display: flex; flex-direction: column; }
.phead { height: 20px; display: flex; justify-content: space-between; align-items: center; padding: 0 1px 1px 2px; border-bottom: 1px solid #8a867f; }
.pact { height: 34px; display: grid; grid-template-columns: 34px 36px 34px 53px 24px; padding: 0 0 2px 9px; align-items: center; border-top: 1px solid #fff; border-bottom: 1px solid #6c6963; }
.s18 { width: 18px; height: 18px; }
.hot { color: #e02020; } .off { color: #333; }
.off use { filter: grayscale(1); }
.go { width: 24px; height: 32px; margin-bottom: -2px; padding-top: 2px; }
.pcur { height: 26px; background: #999; color: #fff; display: grid; grid-template-columns: 19px 92px 52px 18px; align-items: center; padding: 0 0 2px 4px; font-size: 12.500px; }
.pcur > i:first-child { width: 16px; height: 16px; background: #b4ae00; }
.pfilter { height: 34px; display: grid; grid-template-columns: 44px 137px; align-items: center; padding-left: 4px; }
.ptabs { height: 25px; display: grid; grid-template-columns: 48px 12px 59px 63px; padding-left: 4px; align-items: start; }
.tab { height: 23px; display: flex; align-items: center; justify-content: center; border: 1px solid; border-color: #fff #000 #000 #fff; box-shadow: inset -1px -1px #6c6963; padding-bottom: 2px; }
.tab.on { border-color: #000 #fff #fff #000; box-shadow: none; background: repeating-conic-gradient(#fff 0 25%, #d4cfc8 0 50%) 0 0 / 2px 2px; padding: 0 0 0 2px; }
.tab.dd { border-color: #6c6963 #fff #fff #6c6963; box-shadow: none; }
.plist { margin-left: 4px; width: 182px; height: 660px; border: 1px solid; border-color: #6c6963 #fff #fff #6c6963; display: flex; overflow: hidden; }
.plist ul { margin: 0; padding: 1px 0 0; width: 163px; list-style: none; background: linear-gradient(90deg, #000 25px, #fff 25px 111px, #f0f0f0 111px); }
li { height: 24px; display: grid; grid-template-columns: 29px 86px 48px; align-items: center; }
li span, li em { padding-bottom: 2px; }
.sw { width: 16px; height: 16px; margin-left: 5px; overflow: hidden; }
.sw svg { width: 16px; height: 16px; shape-rendering: crispEdges; }
.nwell { color: #d8e6ff; box-shadow: inset 0 0 0 2px #d8e6ff; } .dnw { color: #b05010; box-shadow: inset 0 0 0 1px #b05010; }
.diff { background: #b4ae00; } .pad { background: #ff8000; } .sblk { background: #ffffc0; }
.diff25 { color: #ffff40; } .esd { color: #109010; }
.pimp { border: 1px solid #e01010; color: #e01010; } .nimp { border: 1px solid #00f000; color: #00f000; }
.pimp b, .nimp b { display: block; width: 1px; height: 1px; margin: 3px; background: currentColor; box-shadow: 9px 0, 0 8px, 9px 8px; }
.st { border: 1px solid currentColor; background: repeating-conic-gradient(currentColor 0 25%, #000 0 50%) 0 0 / 2px 2px; }
.po { color: #f00; } .m1 { color: #00f; } .m2 { color: #ff00c0; } .m3 { color: #b848c8; } .m4 { color: #0f0; } .m5 { color: #00a8a8; } .m6 { color: #ffb0b8; } .m7 { color: #0ff; } .m8 { color: #a8a8ff; } .m9 { color: #ffa8ff; }
.co { color: #fff; } .v1 { color: #0ff; } .v2 { color: #ff0; } .v3 { color: #4ca8ff; } .v4 { color: #ff8000; } .v5 { color: #b4ae00; } .v6 { color: #f00; } .v7 { color: #00f; } .v8 { color: #00a010; }
.scroll { width: 17px; display: flex; flex-direction: column; padding-top: 1px; background: repeating-conic-gradient(#fff 0 25%, #d4cfc8 0 50%) 0 0 / 2px 2px; }
.scroll b { background: #d4cfc8; border: 1px solid; border-color: #fff #000 #000 #fff; box-shadow: inset -1px -1px #807c74; }
.sb { height: 16px; display: flex; align-items: center; justify-content: center; }
.thumb { height: 228px; }
.end { margin-top: auto; }
footer { flex: 1; display: flex; justify-content: space-between; align-items: flex-end; padding-left: 6px; border-top: 1px solid #fff; letter-spacing: .35px; }
footer span { align-self: center; padding-bottom: 2px; }
```
